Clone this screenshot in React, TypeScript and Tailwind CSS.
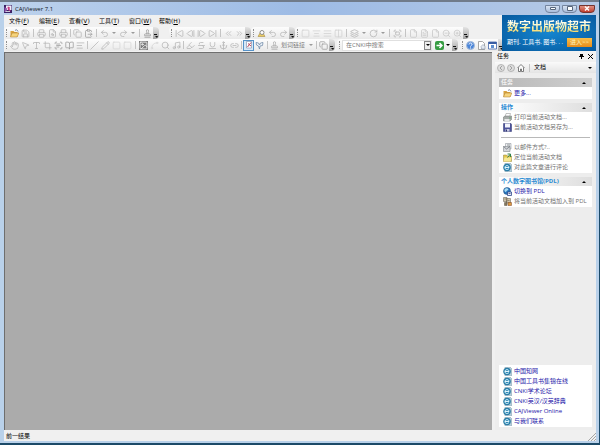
import React, { type ReactNode } from "react";
import {
  AlignCenter, AlignJustify, AlignLeft, Anchor, BookOpen, ChevronsLeft, ChevronsRight, ClipboardPaste, Columns2,
  Copy, Crop, File, FileSearch, FileText, Fullscreen, Hand, Highlighter, Image, Layers, Link2, MousePointer2,
  Music, Pencil, Printer, Redo2, RotateCw, Save, ScanText, Search, SkipBack, SkipForward, Slash, Spline, Square, Stamp,
  StepBack, StepForward, Strikethrough, Type, Underline, Undo2, ZoomIn, ZoomOut, type LucideIcon,
} from "lucide-react";

function Tool({ icon: Icon, label, tone = "text-[#b4b4b4]" }: { icon: LucideIcon; label: string; tone?: string }) {
  return (
    <button aria-label={label} className={`flex h-3 w-[11px] shrink-0 items-center justify-center ${tone}`}>
      <Icon size={9} strokeWidth={2} />
    </button>
  );
}

function Plain({ label, children }: { label: string; children: ReactNode }) {
  return (
    <button aria-label={label} className="flex h-3 w-[11px] shrink-0 items-center justify-center">
      {children}
    </button>
  );
}

function Sep({ tight = false }: { tight?: boolean }) {
  return <span className={`h-2 w-px shrink-0 bg-[#c4c4c4] ${tight ? "mx-px" : "mx-[2px]"}`} />;
}

function Grip() {
  return <span className="mx-[2px] h-2 w-px shrink-0 border-l border-dotted border-[#8f8f8f]" />;
}

function Caret({ dark = false }: { dark?: boolean }) {
  return (
    <span className="flex w-2 shrink-0 justify-center">
      <svg width="4" height="2" viewBox="0 0 4 2" className={dark ? "text-black" : "text-[#9a9a9a]"}>
        <path d="M0 0h4L2 2z" fill="currentColor" />
      </svg>
    </span>
  );
}

function More() {
  return (
    <button
      aria-label="工具栏选项"
      className="flex h-3 w-[6px] shrink-0 items-end justify-center rounded-r-sm bg-linear-to-b from-[#e4e4e4] to-[#a2a2a2] pb-px"
    >
      <svg width="4" height="4" viewBox="0 0 4 4">
        <path d="M0 0h3v1H0zM1 2h3L3 4z" fill="#111" />
      </svg>
    </button>
  );
}

function Band({ children }: { children: ReactNode }) {
  return (
    <div className="flex h-3 shrink-0 items-center rounded-sm bg-linear-to-b from-[#fdfdfd] to-[#e9e9e9]">{children}</div>
  );
}

function FolderIcon() {
  return (
    <svg width="9" height="9" viewBox="0 0 18 18">
      <path d="M1 4h6l2 2h6v10H1z" fill="#d9a441" />
      <path d="M4 8h14l-4 8H1z" fill="#f6d47c" stroke="#a87a2c" />
      <path d="M10 3c3-3 5-1 6 2" fill="none" stroke="#596b8d" strokeWidth="1.5" />
    </svg>
  );
}

function WebIcon() {
  return (
    <svg width="9" height="9" viewBox="0 0 18 18">
      <path d="M4 0h10l3 3v15H4z" fill="#b9cfdb" stroke="#7899ab" />
      <circle cx="8" cy="9" r="7" fill="#2a86b4" stroke="#1b678f" />
      <path d="M4 9h8c0-5-8-5-8 0s5 5 8 2" fill="none" stroke="#e0f5fd" strokeWidth="2" />
    </svg>
  );
}

function PrintIcon() {
  return (
    <svg width="9" height="9" viewBox="0 0 18 18">
      <path d="M6 1h9l-2 7H4z" fill="#fff" stroke="#888" />
      <path d="M1 8l3-2h13v7l-3 3H1z" fill="#a5aaa8" stroke="#6e7371" />
      <path d="M3 12h10v4H3z" fill="#e6e8e7" />
      <path d="M13 9h2v2h-2z" fill="#3b9b45" />
    </svg>
  );
}

function DiskIcon() {
  return (
    <svg width="9" height="9" viewBox="0 0 18 18">
      <path d="M1 1h15l1 2v14H1z" fill="#4b5199" stroke="#2d326f" />
      <path d="M4 1h10v8H4z" fill="#f3f4fb" />
      <path d="M5 12h8v5H5z" fill="#c6c8df" />
      <path d="M6 13h2v4H6z" fill="#2d326f" />
    </svg>
  );
}

function MailIcon() {
  return (
    <svg width="9" height="9" viewBox="0 0 18 18">
      <path d="M5 1h11v11H5z" fill="#eef0f2" stroke="#7f858c" />
      <path d="M1 7h13v10H1z" fill="#d3d6da" stroke="#6e747b" />
      <path d="M1 7l6 5 7-5M8 4h6" fill="none" stroke="#5d636b" strokeWidth="1.3" />
    </svg>
  );
}

function LocateIcon() {
  return (
    <svg width="9" height="9" viewBox="0 0 18 18">
      <path d="M1 4h6l2 2h8v11H1z" fill="#e2c64c" stroke="#91813a" />
      <path d="M3 9h14l-2 8H1z" fill="#f7e995" />
      <path d="M9 2h6v6M15 2l-6 7" fill="none" stroke="#338248" strokeWidth="2" />
    </svg>
  );
}

function GlobeIcon() {
  return (
    <svg width="9" height="9" viewBox="0 0 18 18">
      <circle cx="8" cy="8" r="7" fill="#2b77bd" stroke="#164778" />
      <path d="M3 5c3-4 6-2 8-1-1 3-4 3-5 6C4 10 2 8 3 5" fill="#a9ddf3" />
      <path d="M9 10h8v7H9z" fill="#e9edf7" stroke="#263f86" strokeWidth="1.5" />
      <path d="M11 13h4" stroke="#263f86" strokeWidth="1.5" />
    </svg>
  );
}

function LibraryIcon() {
  return (
    <svg width="9" height="9" viewBox="0 0 18 18">
      <path d="M1 1h7v8H1zM7 3h8v9H7z" fill="#cfc4aa" stroke="#5d5546" />
      <path d="M3 4h3M9 7h4M3 11h5v6H3z" fill="#85785e" stroke="#5d5546" />
      <path d="M10 11h7v6h-7z" fill="#dc9a40" stroke="#7c4023" />
    </svg>
  );
}

function HelpIcon() {
  return (
    <svg width="9" height="9" viewBox="0 0 18 18">
      <circle cx="9" cy="9" r="8" fill="#4c86d9" stroke="#a9bcd8" strokeWidth="2" />
      <path d="M6 7c0-4 6-4 6 0 0 2-3 2-3 4M9 13v2" fill="none" stroke="#fff" strokeWidth="2" />
    </svg>
  );
}

function AppIcon() {
  return (
    <svg width="8" height="8" viewBox="0 0 16 16">
      <path d="M0 0h16v16H0z" fill="#3a2166" />
      <path d="M4 1h11v9H4z" fill="#f2edfa" />
      <path d="M1 4l5 3-1 7H1z" fill="#8c55aa" />
      <path d="M7 4c4-2 6 1 4 4l3 5-6-3z" fill="#c43a7e" />
      <path d="M3 13h9" stroke="#fff" strokeWidth="1.5" />
    </svg>
  );
}

function TitleBar() {
  const box = "flex h-2 w-[15px] items-center justify-center rounded-b-sm border border-[#74859f] bg-linear-to-b from-[#d8e3f2] to-[#a9bddb]";
  return (
    <header className="flex h-[15px] shrink-0 items-center border-t-2 border-[#707b8a] bg-linear-to-r from-[#bdd2ec] via-[#9dbbe5] to-[#b5c9e5] px-1">
      <AppIcon />
      <h1 className="ml-[3px] flex-1 text-[6px] leading-[10px] text-[#10151d]">CAJViewer 7.1</h1>
      <div className="flex gap-[2px]">
        <button aria-label="最小化" className={box}>
          <svg width="6" height="3" viewBox="0 0 6 3"><path d="M.5.5h5v2h-5z" fill="#fff" stroke="#56657a" /></svg>
        </button>
        <button aria-label="最大化" className={box}>
          <svg width="6" height="5" viewBox="0 0 6 5"><path d="M.5.5h5v4h-5z" fill="#fff" stroke="#56657a" /></svg>
        </button>
        <button aria-label="关闭" className="flex h-2 w-4 items-center justify-center rounded-b-sm border border-[#75342f] bg-linear-to-b from-[#de8f82] to-[#c03b2b]">
          <svg width="6" height="5" viewBox="0 0 6 5"><path d="M1 .5l4 4M5 .5l-4 4" stroke="#fff" strokeWidth="1.4" /></svg>
        </button>
      </div>
    </header>
  );
}

const menus: [string, string][] = [["文件", "F"], ["编辑", "E"], ["查看", "V"], ["工具", "T"], ["窗口", "W"], ["帮助", "H"]];

function MenuBar() {
  return (
    <nav className="flex h-3 items-center gap-[9px] pl-[5px] font-['DejaVu_Sans','Noto_Sans_CJK_SC',sans-serif] text-[6px] leading-3 text-black">
      {menus.map(([name, key]) => (
        <button key={name} className="w-[21px] whitespace-nowrap text-left">
          {name}(<span className="underline">{key}</span>)
        </button>
      ))}
    </nav>
  );
}

function StandardBar() {
  return (
    <div className="flex h-3 items-center">
      <Band>
        <Grip />
        <Plain label="打开"><FolderIcon /></Plain>
        <Tool icon={Save} label="保存" />
        <Sep />
        <Tool icon={Printer} label="打印" />
        <Tool icon={FileSearch} label="预览" />
        <Tool icon={Printer} label="打印设置" />
        <Sep tight />
        <Tool icon={Copy} label="复制" />
        <Tool icon={ClipboardPaste} label="粘贴" tone="text-[#9b9b9b]" />
        <Sep />
        <Tool icon={Undo2} label="撤销" />
        <Caret />
        <Tool icon={Redo2} label="重做" />
        <Caret />
        <Sep />
        <Tool icon={Stamp} label="属性" tone="text-[#959595]" />
        <More />
      </Band>
      <span className="w-[10px]" />
      <Band>
        <Grip />
        <Tool icon={SkipBack} label="首页" />
        <Tool icon={StepBack} label="上一页" />
        <Tool icon={StepForward} label="下一页" />
        <Tool icon={SkipForward} label="末页" />
        <Sep />
        <Tool icon={ChevronsLeft} label="后退" />
        <Tool icon={ChevronsRight} label="前进" />
        <More />
      </Band>
      <Band>
        <Grip />
        <Plain label="查找">
          <svg width="9" height="9" viewBox="0 0 18 18">
            <path d="M2 15l7-12 7 12z" fill="#e8ca65" stroke="#9a7f31" />
            <circle cx="10" cy="7" r="4" fill="#fff" stroke="#8d8d8d" strokeWidth="2" />
          </svg>
        </Plain>
        <Tool icon={Undo2} label="查找上一个" />
        <Tool icon={Redo2} label="查找下一个" />
        <More />
      </Band>
      <Band>
        <Grip />
        <Tool icon={Square} label="实际大小" tone="text-[#d0d0d0]" />
        <Tool icon={AlignCenter} label="适合页面" tone="text-[#d0d0d0]" />
        <Tool icon={AlignJustify} label="适合宽度" tone="text-[#d0d0d0]" />
        <Tool icon={Columns2} label="对开" tone="text-[#d0d0d0]" />
        <Sep />
        <Tool icon={Layers} label="布局" />
        <Caret />
        <Tool icon={RotateCw} label="旋转" />
        <Caret />
        <Sep />
        <Tool icon={Fullscreen} label="全屏" />
        <Sep />
        <Tool icon={File} label="单页" tone="text-[#c6c6c6]" />
        <Tool icon={FileText} label="连续" tone="text-[#c6c6c6]" />
        <Tool icon={File} label="双页" tone="text-[#c6c6c6]" />
        <Tool icon={ZoomOut} label="缩小" tone="text-[#c6c6c6]" />
        <Tool icon={ZoomIn} label="放大" tone="text-[#c6c6c6]" />
        <More />
      </Band>
    </div>
  );
}

function ToolsBar() {
  return (
    <div className="flex h-3 items-center gap-[2px]">
      <Band>
        <Grip />
        <Tool icon={Hand} label="手形" />
        <Tool icon={MousePointer2} label="选择" />
        <Tool icon={Type} label="选择文本" />
        <Tool icon={Crop} label="选择图像" />
        <Tool icon={ScanText} label="文字识别" tone="text-[#9b9b9b]" />
        <Tool icon={BookOpen} label="书签" tone="text-[#9b9b9b]" />
        <Tool icon={AlignLeft} label="目录" />
        <Sep tight />
        <Tool icon={Slash} label="直线" />
        <Tool icon={Pencil} label="曲线" />
        <Tool icon={Square} label="矩形" tone="text-[#d6d6d6]" />
        <Tool icon={Square} label="椭圆" tone="text-[#d6d6d6]" />
        <Sep />
        <Plain label="图像"><Image size={9} className="bg-[#7c7c7c] text-white" /></Plain>
        <Tool icon={Spline} label="标注" tone="text-[#d6d6d6]" />
        <Tool icon={Search} label="放大镜" />
        <Tool icon={Music} label="声音" />
        <Sep tight />
        <Tool icon={Highlighter} label="高亮" />
        <Tool icon={Strikethrough} label="删除线" />
        <Tool icon={Underline} label="下划线" />
        <Tool icon={Anchor} label="锚点" />
        <Tool icon={Link2} label="知识元链接" />
        <Sep tight />
        <button aria-label="屏幕取词" className="flex h-[11px] w-[11px] shrink-0 items-center justify-center border border-[#5592c8] bg-[#d6e8f7]">
          <svg width="8" height="8" viewBox="0 0 16 16">
            <path d="M3 1h10v13H3z" fill="#fff" stroke="#667999" />
            <path d="M5 12l7-9M6 5l6 5" stroke="#bd475b" strokeWidth="2" />
          </svg>
        </button>
        <Plain label="词典">
          <svg width="9" height="9" viewBox="0 0 18 18">
            <path d="M2 3l5 1 2 4 2-4 5-1-1 6-5 1-1 6-2-6-4-2z" fill="#eef4fa" stroke="#6c87a6" strokeWidth="1.5" />
          </svg>
        </Plain>
        <Sep />
        <button className="flex h-3 w-[37px] shrink-0 items-center gap-[2px] text-[6px] leading-3 whitespace-nowrap text-[#7c7c7c]">
          <Stamp size={9} className="shrink-0 text-[#a8a8a8]" />划词链接
        </button>
        <Caret />
        <Sep tight />
        <Tool icon={Copy} label="版本" tone="text-[#9b9b9b]" />
        <More />
      </Band>
      <Band>
        <Grip />
        <div className="flex h-[11px] w-[90px] items-center border border-[#e0e0e0] bg-white">
          <input
            aria-label="在CNKI中搜索"
            placeholder="在CNKI中搜索"
            className="w-0 min-w-0 flex-1 pl-[3px] text-[6px] leading-[9px] placeholder:text-[#777]"
          />
          <button aria-label="搜索范围" className="flex h-[9px] w-[7px] items-center justify-center border border-[#888] bg-[#eee]">
            <svg width="4" height="2" viewBox="0 0 4 2"><path d="M0 0h4L2 2z" /></svg>
          </button>
        </div>
        <button aria-label="搜索" className="ml-[3px] flex h-[9px] w-[9px] items-center justify-center rounded-xs bg-[#369c42]">
          <svg width="7" height="7" viewBox="0 0 14 14"><path d="M1 7h10M7 2l5 5-5 5" fill="none" stroke="#fff" strokeWidth="3" /></svg>
        </button>
        <Caret dark />
        <More />
      </Band>
      <Band>
        <Grip />
        <Plain label="帮助"><HelpIcon /></Plain>
        <Plain label="主页">
          <svg width="9" height="9" viewBox="0 0 18 18">
            <path d="M3 1h8l4 4v12H3z" fill="#fff" stroke="#8b8b8b" strokeWidth="1.5" />
            <path d="M8 11l4-4 4 4v5H9z" fill="#e3e8ef" stroke="#71839b" />
          </svg>
        </Plain>
        <Plain label="任务窗格">
          <svg width="9" height="9" viewBox="0 0 18 18">
            <path d="M1 2h16v14H1z" fill="#fff" stroke="#385ca3" strokeWidth="1.5" />
            <path d="M1 2h16v4H1z" fill="#385ca3" />
            <path d="M6 8h6v6H6z" fill="#5d8ed0" />
          </svg>
        </Plain>
        <More />
      </Band>
    </div>
  );
}

function Banner() {
  return (
    <a href="#market" className="flex w-[94px] shrink-0 flex-col items-center justify-center gap-1 overflow-hidden bg-radial from-[#1585cf] to-[#075a9f] whitespace-nowrap">
      <strong className="bg-linear-to-b from-white via-[#fff4b0] to-[#f3cc45] bg-clip-text text-[12px] leading-[14px] font-bold text-transparent">
        数字出版物超市
      </strong>
      <span className="flex w-full items-center justify-between pr-1 pl-[5px] text-[6px] leading-[9px] text-white">
        <span>期刊. 工具书. 图书. . .</span>
        <span className="w-[25px] bg-linear-to-b from-[#f9c04a] to-[#e78b17] text-center text-[#fff1be]">进入&gt;&gt;</span>
      </span>
    </a>
  );
}

type Entry = { icon: ReactNode; text: string; active?: boolean };

function Entries({ items }: { items: Entry[] }) {
  return (
    <ul>
      {items.map(({ icon, text, active }) => (
        <li key={text}>
          <a href="#task" className={`flex h-[10px] items-center gap-[2px] pl-1 text-[6px] leading-[10px] whitespace-nowrap ${active ? "text-[#1c14a8]" : "text-[#6f6f6f]"}`}>
            {icon}
            {text}
          </a>
        </li>
      ))}
    </ul>
  );
}

function Section({ title, muted = false, children }: { title: string; muted?: boolean; children: ReactNode }) {
  return (
    <section className="bg-white pb-px">
      <h2 className={`flex h-[9px] items-center justify-between px-[2px] text-[6px] leading-[9px] font-bold ${muted ? "bg-linear-to-r from-[#b9b9b9] to-[#cfcfcf] text-[#f2f2f2]" : "bg-linear-to-r from-white to-[#dedede] text-[#2b8bd3]"}`}>
        {title}
        <svg width="4" height="2" viewBox="0 0 4 2" className="mr-1 text-black"><path d="M0 2h4L2 0z" fill="currentColor" /></svg>
      </h2>
      {children}
    </section>
  );
}

const links = ["中国知网", "中国工具书集锦在线", "CNKI学术论坛", "CNKI英汉/汉英辞典", "CAJViewer Online", "与我们联系"];

function NavCircle({ label, d }: { label: string; d: string }) {
  return (
    <button aria-label={label}>
      <svg width="8" height="8" viewBox="0 0 16 16">
        <circle cx="8" cy="8" r="7" fill="#dedede" stroke="#a4a4a4" strokeWidth="1.5" />
        <path d={d} fill="none" stroke="#a0a0a0" strokeWidth="2" />
      </svg>
    </button>
  );
}

function TaskPane() {
  return (
    <aside className="flex w-[101px] shrink-0 flex-col bg-[#ededed]">
      <div className="flex h-[11px] shrink-0 items-center gap-1 bg-[#f1f1f1] pr-[3px] pl-[2px] text-[6px] leading-[11px] text-black">
        <span className="flex-1">任务</span>
        <button aria-label="固定">
          <svg width="5" height="5" viewBox="0 0 5 5"><path d="M1 0h3v2h1v1H3v2H2V3H0V2h1z" /></svg>
        </button>
        <button aria-label="关闭任务窗格">
          <svg width="5" height="5" viewBox="0 0 5 5"><path d="M0 0l5 5M5 0L0 5" stroke="#000" strokeWidth="1" /></svg>
        </button>
      </div>
      <div className="flex h-[11px] shrink-0 items-center gap-[2px] bg-linear-to-b from-[#fafafa] to-[#e4e4e4] px-[2px] text-[6px] leading-[11px] text-black">
        <NavCircle label="后退" d="M10 4L6 8l4 4" />
        <NavCircle label="前进" d="M6 4l4 4-4 4" />
        <button aria-label="主页">
          <svg width="8" height="8" viewBox="0 0 16 16"><path d="M1 8l7-7 7 7M3 7v8h4v-5h2v5h4V7" fill="#fff" stroke="#5e5e5e" strokeWidth="1.6" /></svg>
        </button>
        <Sep />
        <button className="flex flex-1 items-center justify-between">文档<Caret dark /></button>
      </div>
      <div className="flex flex-1 flex-col gap-1 px-1 pt-[5px] pb-[3px]">
        <Section title="任务" muted>
          <div className="pt-px">
            <Entries items={[{ icon: <FolderIcon />, text: "更多...", active: true }]} />
          </div>
        </Section>
        <Section title="操作">
          <Entries items={[{ icon: <PrintIcon />, text: "打印当前活动文档..." }, { icon: <DiskIcon />, text: "当前活动文档另存为..." }]} />
          <hr className="mx-[2px] mt-[5px] mb-1 border-[#b9b9b9]" />
          <Entries
            items={[
              { icon: <MailIcon />, text: "以邮件方式?.." },
              { icon: <LocateIcon />, text: "定位当前活动文档" },
              { icon: <WebIcon />, text: "对此篇文章进行评论" },
            ]}
          />
        </Section>
        <Section title="个人数字图书馆(PDL)">
          <Entries items={[{ icon: <GlobeIcon />, text: "切换到 PDL", active: true }, { icon: <LibraryIcon />, text: "将当前活动文档加入到 PDL" }]} />
        </Section>
        <div className="mt-auto bg-white py-px">
          <Entries items={links.map((text) => ({ icon: <WebIcon />, text, active: true }))} />
        </div>
      </div>
    </aside>
  );
}

export default function App() {
  return (
    <div className="flex h-screen flex-col overflow-hidden border-r border-b-2 border-[#1c4a68] bg-[#b9d1ea] font-['Open_Sans','Noto_Sans_CJK_SC',sans-serif]">
      <TitleBar />
      <div className="mr-[3px] ml-1 flex min-h-0 flex-1 flex-col bg-[#f0f0f0]">
        <div className="flex shrink-0">
          <div className="min-w-0 flex-1">
            <MenuBar />
            <StandardBar />
            <ToolsBar />
          </div>
          <Banner />
        </div>
        <div className="flex min-h-0 flex-1">
          <main className="mr-[3px] mt-px flex-1 border-t border-l border-[#6e6e6e] bg-[#ababab]" />
          <TaskPane />
        </div>
        <footer className="flex h-[11px] shrink-0 items-end justify-between pl-[2px] text-[6px] leading-[9px] text-black">
          <span>前一结果</span>
          <svg width="8" height="8" viewBox="0 0 8 8"><path d="M0 8l8-8M3 8l5-5M6 8l2-2" stroke="#a5a5a5" /></svg>
        </footer>
      </div>
      <div className="h-[2px] shrink-0" />
    </div>
  );
}
